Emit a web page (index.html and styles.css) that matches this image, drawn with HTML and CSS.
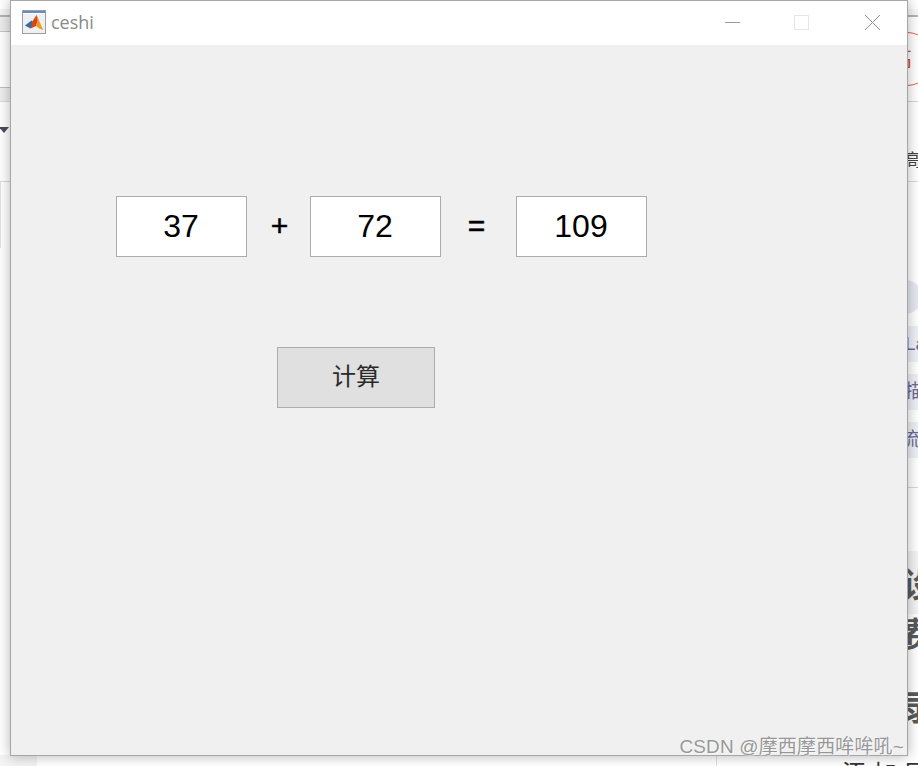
FILE: index.html
```html
<!DOCTYPE html>
<html lang="zh-CN">
<head>
<meta charset="utf-8">
<title>ceshi</title>
<link rel="stylesheet" href="styles.css">
</head>
<body>
<div class="backdrop">
  <div class="bg-band bl-top"></div>
  <div class="bg-band bl-2"></div>
  <div class="bg-line bl-3"></div>
  <div class="caret"></div>
  <div class="left-panel"></div>
  <div class="left-foot"></div>
  <div class="bg-band br-1"></div>
  <div class="red-badge"><span>高</span></div>
  <div class="frag fr-gao">高</div>
  <div class="bg-line br-3"></div>
  <div class="avatar"></div>
  <div class="chip ch-1">La</div>
  <div class="chip ch-2">描</div>
  <div class="chip ch-3">流</div>
  <div class="bg-line br-4"></div>
  <div class="frag-band fb-1"></div>
  <div class="frag big b-1">设</div>
  <div class="frag big b-2">费</div>
  <div class="frag big b-3">录</div>
  <div class="foot-rule"></div>
  <div class="frag foot-text">添 加 目</div>
</div>

<main class="window">
  <header class="titlebar">
    <svg class="app-icon" viewBox="0 0 24 24" width="24" height="24" aria-hidden="true">
      <rect x="0.5" y="0.5" width="23" height="23" fill="#eef0f2" stroke="#9a9ea2"/>
      <rect x="1" y="1" width="22" height="2" fill="#5f8fc4"/>
      <rect x="1" y="3" width="22" height="1" fill="#ffffff"/>
      <path d="M3 15.5 L9.5 10.5 L12 13 L8.5 18.5 Z" fill="#2f6cb0"/>
      <path d="M8.5 18.5 L10 12 L14.5 5 L16 10 L14 16 Z" fill="#d8461c"/>
      <path d="M14.5 5 C16.5 8 18.5 15 21.5 20 C18.5 19 16 18 14 16 L15.5 11 Z" fill="#f09a1e"/>
    </svg>
    <span class="title">ceshi</span>
    <div class="win-controls">
      <svg class="ctl" viewBox="0 0 15 15" width="15" height="15" aria-hidden="true"><path d="M0 7.5H15" stroke="#9b9b9b" fill="none"/></svg>
      <svg class="ctl ctl-max" viewBox="0 0 15 15" width="15" height="15" aria-hidden="true"><rect x="0.5" y="0.5" width="14" height="14" stroke="#e6e6e6" fill="none"/></svg>
      <svg class="ctl ctl-close" viewBox="0 0 15 15" width="15" height="15" aria-hidden="true"><path d="M0 0L15 15M15 0L0 15" stroke="#8f8f8f" fill="none"/></svg>
    </div>
  </header>
  <section class="canvas">
    <div class="equation">
      <output class="field f-a">37</output>
      <span class="op op-plus">+</span>
      <output class="field f-b">72</output>
      <span class="op op-eq">=</span>
      <output class="field f-c">109</output>
    </div>
    <button class="calc" type="button">计算</button>
  </section>
</main>

<div class="watermark">CSDN @摩西摩西哞哞吼~</div>
</body>
</html>
```
FILE: styles.css
```css
* { box-sizing: border-box; }
html, body { margin: 0; padding: 0; }
body {
  width: 918px;
  height: 766px;
  overflow: hidden;
  position: relative;
  background: #ffffff;
  font-family: "Liberation Sans", "Noto Sans CJK SC", sans-serif;
}

/* The page seen behind the window */
.backdrop { position: absolute; inset: 0; overflow: hidden; }
.bg-line { position: absolute; height: 1px; background: #d9d9d9; }
.bg-band { position: absolute; background: #f1f1f1; }
.bl-top {
  left: 0; top: 9px; width: 10px; height: 23px;
  background: linear-gradient(#f4f4f4 0 6px, #b4b4b4 6px 8px, #ececec 8px);
  border-bottom: 1px solid #c4c4c4;
}
.bl-2 { left: 0; top: 87px; width: 10px; height: 15px; background: #eeeeee; border-top: 1px solid #bfbfbf; border-bottom: 1px solid #dcdcdc; }
.bl-3 { left: 0; top: 181px; width: 10px; }
.caret {
  position: absolute; left: 0; top: 127px; width: 0; height: 0;
  border-left: 5px solid transparent; border-right: 5px solid transparent;
  border-top: 6px solid #4a4a5c; margin-left: -1px;
}
.left-panel { position: absolute; left: 0; top: 182px; width: 1px; height: 66px; background: #e2e2e2; }
.left-foot { position: absolute; left: 0; top: 755px; width: 37px; height: 11px; background: #f3f3f3; }
.br-1 {
  left: 908px; top: 9px; width: 10px; height: 93px;
  background: linear-gradient(#f7f7f7 0 6px, #b4b4b4 6px 8px, #ffffff 8px);
  border-bottom: 1px solid #d5d5d5;
}
.red-badge {
  position: absolute; left: 880px; top: 32px; width: 54px; height: 54px;
  border: 1px solid #e8604c; border-radius: 50%; background: #ffffff;
  color: #d8432e; font-size: 21px; line-height: 52px;
}
.red-badge span { display: block; margin-left: 10px; width: 22px; }
.br-3 { left: 908px; top: 181px; width: 10px; }
.frag { position: absolute; color: #444; }
.fr-gao { left: 904px; top: 151px; font-size: 17px; line-height: 20px; }
.avatar { position: absolute; left: 888px; top: 280px; width: 34px; height: 34px; border-radius: 50%; background: #e6e8f0; }
.chip {
  position: absolute; left: 908px; width: 10px; height: 36px; overflow: hidden;
  background: #eef0f7; color: #6a6a94; font-size: 19px; line-height: 36px; white-space: nowrap; text-indent: -3px;
}
.ch-1 { top: 326px; }
.ch-2 { top: 374px; }
.ch-3 { top: 422px; text-indent: -7px; }
.br-4 { left: 908px; top: 487px; width: 10px; }
.frag-band { position: absolute; left: 908px; top: 551px; width: 10px; height: 63px; background: #f3f3f3; }
.big { font-weight: 700; font-size: 34px; line-height: 40px; color: #5a5a5a; }
.b-1 { left: 902px; top: 565px; }
.b-2 { left: 902px; top: 615px; }
.b-3 { left: 902px; top: 688px; }
.foot-rule { position: absolute; left: 716px; top: 755px; width: 1px; height: 11px; background: #dcdcdc; }
.foot-text { left: 842px; top: 760px; font-size: 24px; line-height: 28px; color: #333; white-space: nowrap; }

/* The application window */
.window {
  position: absolute; left: 10px; top: 0; width: 898px; height: 756px;
  display: flex; flex-direction: column;
  border: 1px solid #a6a6a6;
  background: #f0f0f0;
  box-shadow: 0 0 12px rgba(0, 0, 0, 0.3);
}
.titlebar {
  flex: none; height: 44px; background: #ffffff;
  display: flex; align-items: center; padding: 0 27px 2px 11px;
}
.app-icon { flex: none; }
.title { margin-left: 5px; font-family: "Open Sans", sans-serif; font-size: 18px; color: #8a8a8a; }
.win-controls { margin-left: auto; display: flex; }
.ctl { display: block; }
.ctl-max { margin-left: 54px; }
.ctl-close { margin-left: 56px; }

.canvas { flex: 1; padding: 151px 0 0 105px; }
.equation { display: flex; align-items: stretch; height: 61px; }
.field {
  width: 131px; height: 61px; background: #ffffff; border: 1px solid #ababb0;
  display: flex; align-items: center; justify-content: center;
  font-size: 32px; color: #000; padding: 0 1px 1px 0;
}
.op { display: flex; align-items: center; justify-content: center; font-size: 30px; color: #000; padding-bottom: 2px; -webkit-text-stroke: 0.5px #000; }
.op-plus { width: 63px; padding-left: 2px; }
.op-eq { width: 75px; padding-right: 4px; }
.calc {
  display: block; margin: 90px 0 0 161px;
  width: 158px; height: 61px; padding: 0 0 6px;
  background: #e0e0e0; border: 1px solid #ababb0; border-radius: 0;
  font-family: "Noto Sans CJK SC", sans-serif; font-size: 24px; color: #2a2a2a;
}

.watermark {
  position: absolute; right: 14px; top: 735px;
  font-size: 19px; line-height: 24px; white-space: nowrap; letter-spacing: 0.15px;
  color: rgba(120, 120, 120, 0.75);
  text-shadow: 1px 1px 1px rgba(255,255,255,0.6);
}
```
